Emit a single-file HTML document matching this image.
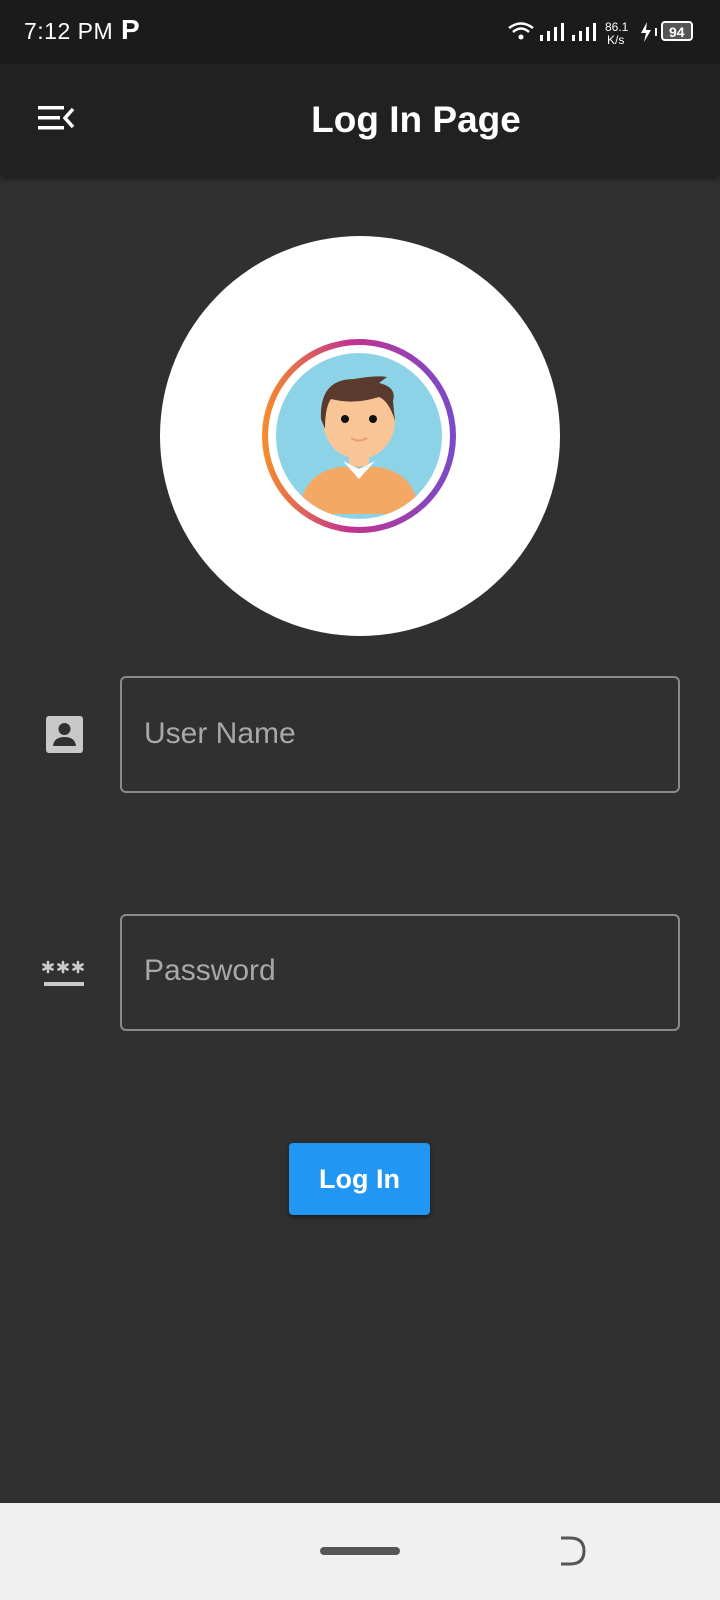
<!DOCTYPE html>
<html><head><meta charset="utf-8"><style>
*{margin:0;padding:0;box-sizing:border-box}
body{width:720px;height:1600px;background:#303030;font-family:"Liberation Sans",sans-serif;position:relative;overflow:hidden}
.abs{position:absolute}
.sb{left:0;top:0;width:720px;height:64px;background:#1b1b1b;color:#fff}
.ab{left:0;top:64px;width:720px;height:112px;background:#212121;box-shadow:0 3px 6px rgba(0,0,0,.4)}
.box{border:2px solid #8a8a8a;border-radius:6px;left:120px;width:560px;height:117px}
.ph{color:#a8a8a8;font-size:30px;left:144px}
</style></head><body>
<div class="abs sb">
 <div class="abs" style="left:24px;top:18px;font-size:23px;letter-spacing:0.5px">7:12 PM</div>
 <div class="abs" style="left:121px;top:14px;font-size:28px;font-weight:bold">P</div>
 <svg class="abs" style="left:507px;top:20px" width="200" height="26" viewBox="0 0 200 26">
  <path d="M2 8 Q14 -1 26 8" stroke="#fff" stroke-width="2.5" fill="none"/>
  <path d="M6 12 Q14 5 22 12" stroke="#fff" stroke-width="2.5" fill="none"/>
  <circle cx="14" cy="17" r="2.5" fill="#fff"/>
  <rect x="33" y="15" width="3" height="6" fill="#fff"/><rect x="40" y="11" width="3" height="10" fill="#fff"/><rect x="47" y="7" width="3" height="14" fill="#fff"/><rect x="54" y="3" width="3" height="18" fill="#fff"/>
  <rect x="65" y="15" width="3" height="6" fill="#fff"/><rect x="72" y="11" width="3" height="10" fill="#fff"/><rect x="79" y="7" width="3" height="14" fill="#fff"/><rect x="86" y="3" width="3" height="18" fill="#fff"/>
  <text x="98" y="11" fill="#fff" font-size="12" font-family="Liberation Sans">86.1</text>
  <text x="100" y="24" fill="#fff" font-size="12" font-family="Liberation Sans">K/s</text>
  <path d="M140 2 L134 13 L139 13 L137 22 L144 10 L139 10 Z" fill="#fff"/>
  <rect x="148" y="8" width="2" height="8" fill="#fff"/>
  <rect x="155" y="2" width="30" height="18" rx="3" stroke="#fff" stroke-width="2" fill="#555"/>
  <text x="162" y="17" fill="#fff" font-size="14" font-weight="bold" font-family="Liberation Sans">94</text>
 </svg>
</div>
<div class="abs ab">
 <svg class="abs" style="left:38px;top:42px" width="38" height="28"><rect x="0" y="0" width="26" height="3.5" fill="#fff"/><rect x="0" y="10" width="22" height="3.5" fill="#fff"/><rect x="0" y="20" width="26" height="3.5" fill="#fff"/><path d="M35 3 L27 12 L35 21" stroke="#fff" stroke-width="3.5" fill="none"/></svg>
 <div class="abs" style="left:0;width:832px;text-align:center;top:35px;color:#fff;font-size:37px;font-weight:bold">Log In Page</div>
</div>
<div class="abs" style="left:160px;top:236px;width:400px;height:400px;border-radius:50%;background:#fff"></div>
<svg class="abs" style="left:259px;top:339px" width="200" height="200" viewBox="0 0 200 200">
 <defs><linearGradient id="g" x1="0" y1="0" x2="1" y2="0"><stop offset="0" stop-color="#f58b2d"/><stop offset=".45" stop-color="#c2338f"/><stop offset="1" stop-color="#7a4bc8"/></linearGradient>
 <clipPath id="c"><circle cx="100" cy="97" r="83"/></clipPath></defs>
 <circle cx="100" cy="97" r="94" stroke="url(#g)" stroke-width="6" fill="none"/>
 <circle cx="100" cy="97" r="83" fill="#8dd3e8"/>
 <g clip-path="url(#c)">
  <path d="M40 175 Q42 135 80 128 L120 128 Q158 135 160 175 Z" fill="#f3a865"/>
  <rect x="90" y="105" width="20" height="22" fill="#f9c597"/>
  <path d="M84 122 L100 140 L116 122 L100 130 Z" fill="#fff"/>
  <ellipse cx="100" cy="82" rx="36" ry="38" fill="#f9c597"/>
  <path d="M62 80 Q60 40 95 40 Q118 36 128 38 L120 44 Q138 48 134 62 L136 82 Q130 62 120 58 Q95 66 72 60 Q66 68 66 90 Z" fill="#5a3a2c"/>
  <circle cx="86" cy="80" r="4" fill="#111"/><circle cx="114" cy="80" r="4" fill="#111"/>
  <path d="M92 99 Q100 104 108 99" stroke="#e89b7d" stroke-width="2" fill="none"/>
 </g>
</svg>
<svg class="abs" style="left:46px;top:716px" width="37" height="37" viewBox="0 0 37 37"><rect width="37" height="37" rx="3" fill="#c8c8c8"/><circle cx="18.5" cy="13" r="6" fill="#303030"/><path d="M7 30 Q8 21 18.5 21 Q29 21 30 30 Z" fill="#303030"/></svg>
<div class="abs box" style="top:676px"></div>
<div class="abs ph" style="top:717px">User Name</div>
<svg class="abs" style="left:41px;top:960px" width="46" height="28" viewBox="0 0 46 28">
 <g stroke="#ccc" stroke-width="2.6" stroke-linecap="round">
  <path d="M7 2 V12 M2.5 4.5 L11.5 9.5 M2.5 9.5 L11.5 4.5"/>
  <path d="M22 2 V12 M17.5 4.5 L26.5 9.5 M17.5 9.5 L26.5 4.5"/>
  <path d="M37 2 V12 M32.5 4.5 L41.5 9.5 M32.5 9.5 L41.5 4.5"/>
 </g>
 <rect x="3" y="22" width="40" height="4" fill="#ccc"/>
</svg>
<div class="abs box" style="top:914px"></div>
<div class="abs ph" style="top:954px">Password</div>
<div class="abs" style="left:289px;top:1143px;width:141px;height:72px;background:#2196f3;border-radius:4px;box-shadow:0 2px 4px rgba(0,0,0,.5);color:#fff;font-size:27px;font-weight:bold;text-align:center;line-height:72px">Log In</div>
<div class="abs" style="left:0;top:1503px;width:720px;height:97px;background:#f0f0f0"></div>
<div class="abs" style="left:320px;top:1547px;width:80px;height:8px;border-radius:4px;background:#555"></div>
<svg class="abs" style="left:556px;top:1534px" width="34" height="34"><path d="M5 4 L14 4 Q28 4 28 17 Q28 30 14 30 L5 30" stroke="#555" stroke-width="3" fill="none"/></svg>
</body></html>
